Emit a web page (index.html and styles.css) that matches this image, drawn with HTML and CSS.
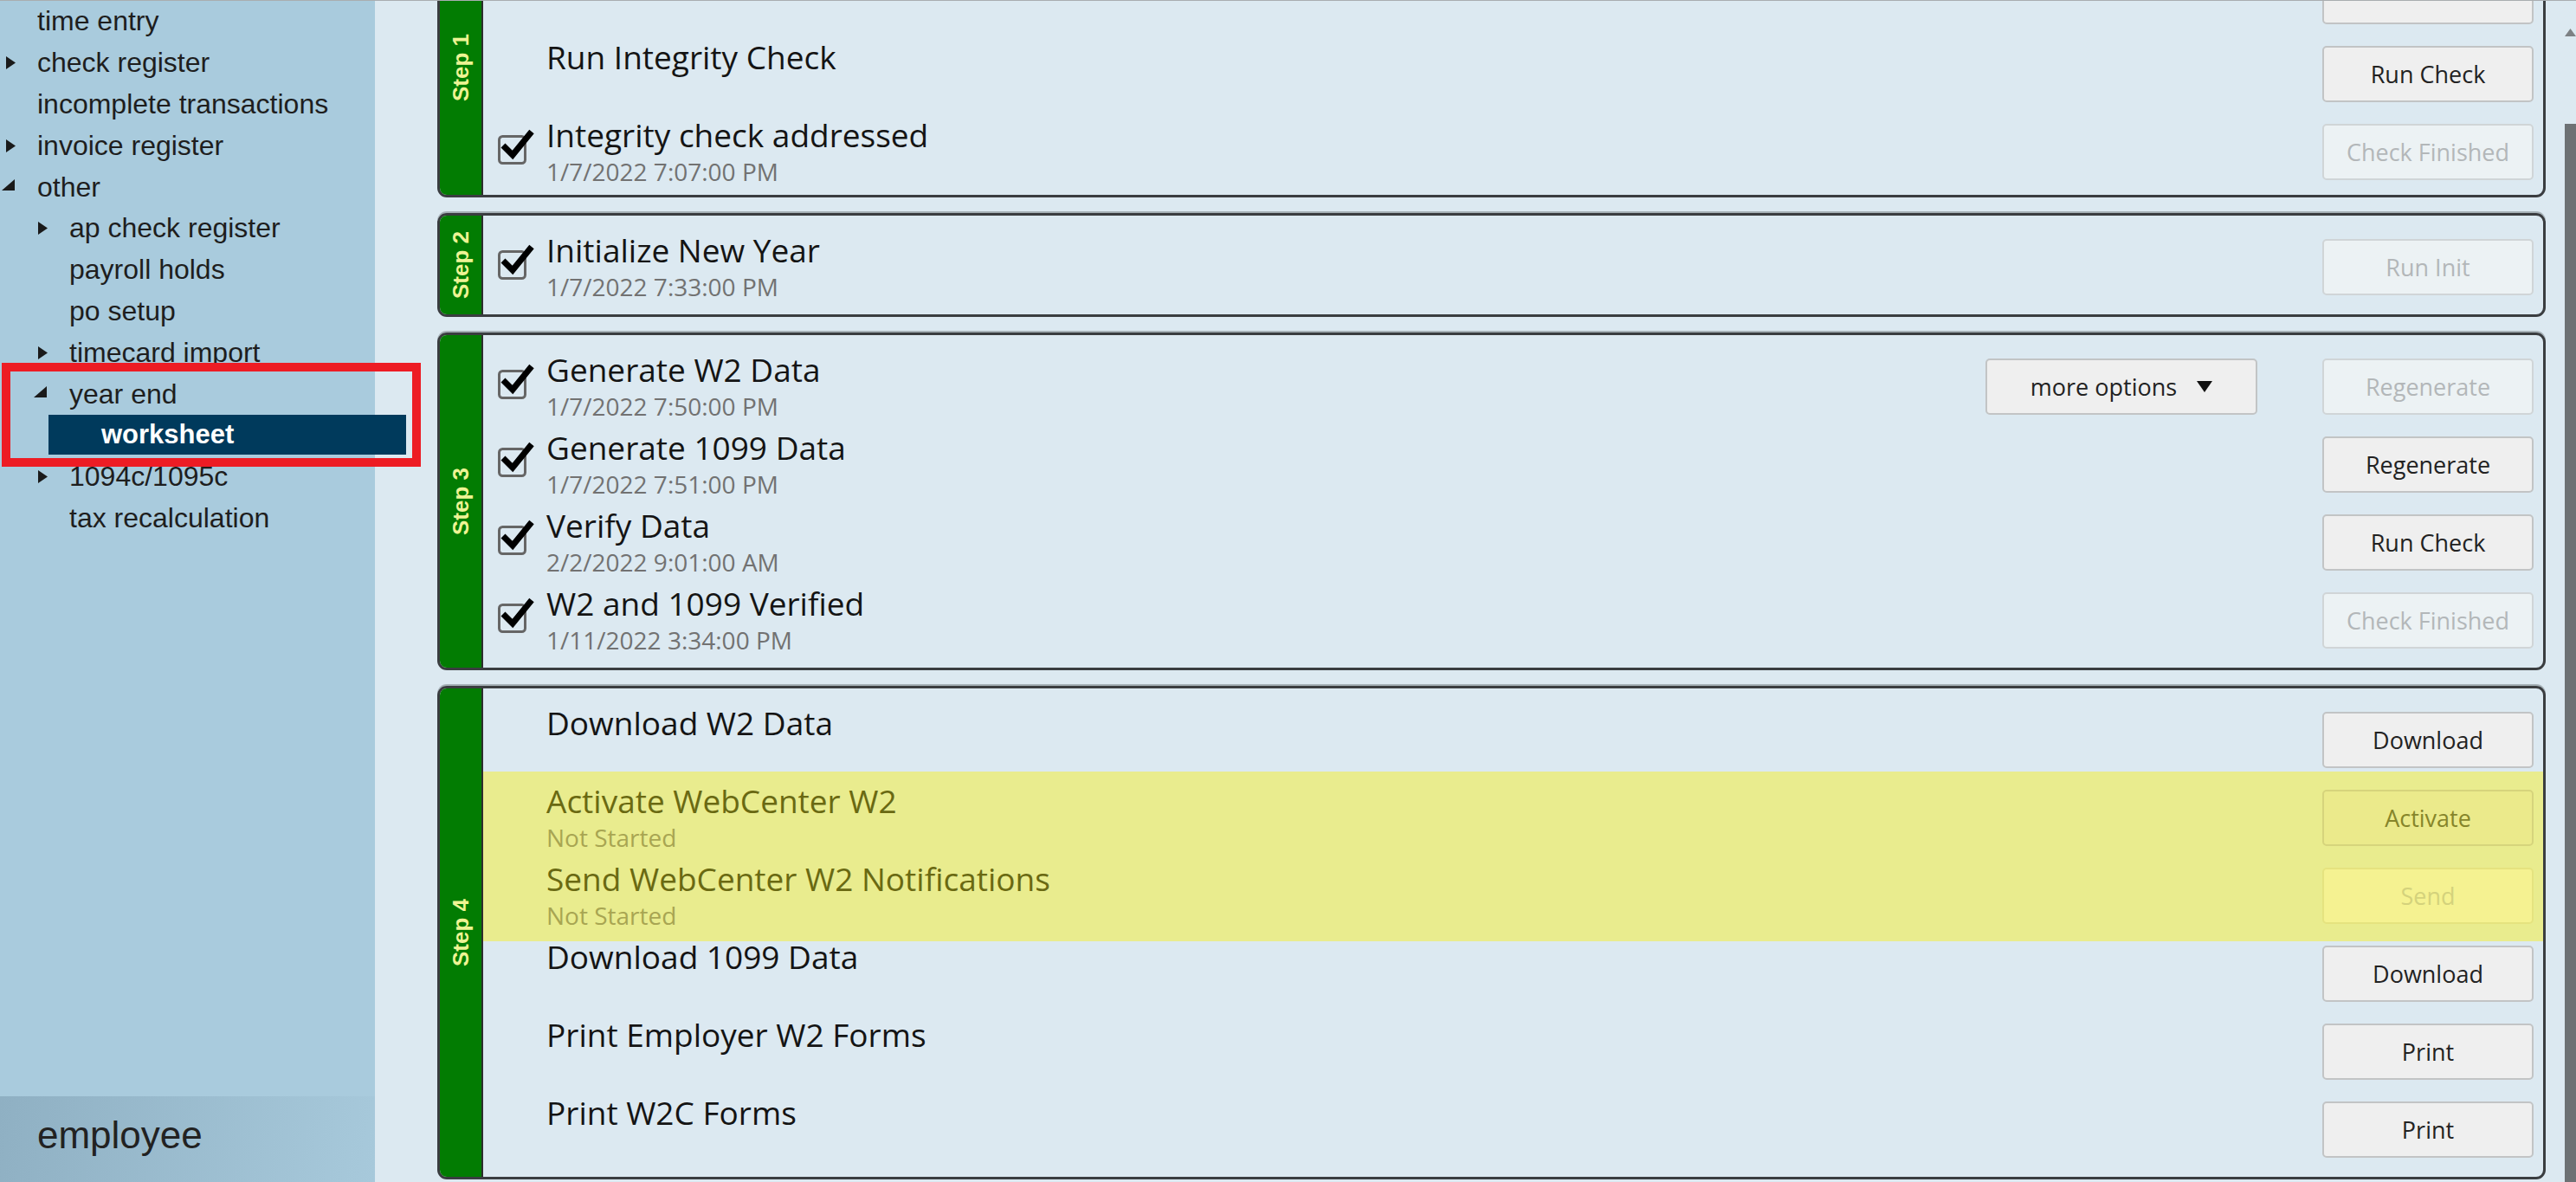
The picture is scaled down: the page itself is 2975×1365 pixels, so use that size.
FILE: index.html
```html
<!DOCTYPE html>
<html lang="en">
<head>
<meta charset="utf-8">
<title>Year End Worksheet</title>
<link rel="stylesheet" href="styles.css">
</head>
<body>
<div class="app">
  <aside class="sidebar">
    <ul class="tree">
      <li class="node"><span class="tog"></span><span class="lbl">time entry</span></li>
      <li class="node"><span class="tog"><svg class="tri-r" viewBox="0 0 11 15"><polygon points="0,0 11,7.5 0,15"/></svg></span><span class="lbl">check register</span></li>
      <li class="node"><span class="tog"></span><span class="lbl">incomplete transactions</span></li>
      <li class="node"><span class="tog"><svg class="tri-r" viewBox="0 0 11 15"><polygon points="0,0 11,7.5 0,15"/></svg></span><span class="lbl">invoice register</span></li>
      <li class="node"><span class="tog"><svg class="tri-se" viewBox="0 0 15 13"><polygon points="15,0 15,13 0,13"/></svg></span><span class="lbl">other</span></li>
      <li class="node l2"><span class="tog"><svg class="tri-r" viewBox="0 0 11 15"><polygon points="0,0 11,7.5 0,15"/></svg></span><span class="lbl">ap check register</span></li>
      <li class="node l2"><span class="tog"></span><span class="lbl">payroll holds</span></li>
      <li class="node l2"><span class="tog"></span><span class="lbl">po setup</span></li>
      <li class="node l2"><span class="tog"><svg class="tri-r" viewBox="0 0 11 15"><polygon points="0,0 11,7.5 0,15"/></svg></span><span class="lbl">timecard import</span></li>
      <li class="node l2"><span class="tog"><svg class="tri-se" viewBox="0 0 15 13"><polygon points="15,0 15,13 0,13"/></svg></span><span class="lbl">year end</span></li>
      <li class="node sel"><span class="lbl">worksheet</span></li>
      <li class="node l2"><span class="tog"><svg class="tri-r" viewBox="0 0 11 15"><polygon points="0,0 11,7.5 0,15"/></svg></span><span class="lbl">1094c/1095c</span></li>
      <li class="node l2"><span class="tog"></span><span class="lbl">tax recalculation</span></li>
    </ul>
    <div class="annot"></div>
    <div class="module">employee</div>
  </aside>

  <main class="main">
    <div class="steps">
      <section class="panel p1">
        <div class="band"><span>Step 1</span></div>
        <div class="rows">
          <div class="row">
            <span class="cb"></span>
            <div class="txt"><div class="title">Archive Current Data (Best Practice)</div></div>
            <button class="btn"></button>
          </div>
          <div class="row">
            <span class="cb"></span>
            <div class="txt"><div class="title">Run Integrity Check</div></div>
            <button class="btn">Run Check</button>
          </div>
          <div class="row">
            <svg class="cb" viewBox="0 0 44 44"><rect x="3.5" y="8.5" width="30" height="31" rx="4" fill="none" stroke="#666" stroke-width="3"/><path d="M8 19 L19 30 L41 3" fill="none" stroke="#000" stroke-width="7"/></svg>
            <div class="txt"><div class="title">Integrity check addressed</div><div class="date">1/7/2022 7:07:00 PM</div></div>
            <button class="btn dis">Check Finished</button>
          </div>
        </div>
      </section>

      <section class="panel">
        <div class="band"><span>Step 2</span></div>
        <div class="rows">
          <div class="row">
            <svg class="cb" viewBox="0 0 44 44"><rect x="3.5" y="8.5" width="30" height="31" rx="4" fill="none" stroke="#666" stroke-width="3"/><path d="M8 19 L19 30 L41 3" fill="none" stroke="#000" stroke-width="7"/></svg>
            <div class="txt"><div class="title">Initialize New Year</div><div class="date">1/7/2022 7:33:00 PM</div></div>
            <button class="btn dis">Run Init</button>
          </div>
        </div>
      </section>

      <section class="panel">
        <div class="band"><span>Step 3</span></div>
        <div class="rows">
          <div class="row">
            <svg class="cb" viewBox="0 0 44 44"><rect x="3.5" y="8.5" width="30" height="31" rx="4" fill="none" stroke="#666" stroke-width="3"/><path d="M8 19 L19 30 L41 3" fill="none" stroke="#000" stroke-width="7"/></svg>
            <div class="txt"><div class="title">Generate W2 Data</div><div class="date">1/7/2022 7:50:00 PM</div></div>
            <button class="btn more">more options <svg class="caret" viewBox="0 0 18 13"><polygon points="0,0 18,0 9,13"/></svg></button>
            <button class="btn dis">Regenerate</button>
          </div>
          <div class="row">
            <svg class="cb" viewBox="0 0 44 44"><rect x="3.5" y="8.5" width="30" height="31" rx="4" fill="none" stroke="#666" stroke-width="3"/><path d="M8 19 L19 30 L41 3" fill="none" stroke="#000" stroke-width="7"/></svg>
            <div class="txt"><div class="title">Generate 1099 Data</div><div class="date">1/7/2022 7:51:00 PM</div></div>
            <button class="btn">Regenerate</button>
          </div>
          <div class="row">
            <svg class="cb" viewBox="0 0 44 44"><rect x="3.5" y="8.5" width="30" height="31" rx="4" fill="none" stroke="#666" stroke-width="3"/><path d="M8 19 L19 30 L41 3" fill="none" stroke="#000" stroke-width="7"/></svg>
            <div class="txt"><div class="title">Verify Data</div><div class="date">2/2/2022 9:01:00 AM</div></div>
            <button class="btn">Run Check</button>
          </div>
          <div class="row">
            <svg class="cb" viewBox="0 0 44 44"><rect x="3.5" y="8.5" width="30" height="31" rx="4" fill="none" stroke="#666" stroke-width="3"/><path d="M8 19 L19 30 L41 3" fill="none" stroke="#000" stroke-width="7"/></svg>
            <div class="txt"><div class="title">W2 and 1099 Verified</div><div class="date">1/11/2022 3:34:00 PM</div></div>
            <button class="btn dis">Check Finished</button>
          </div>
        </div>
      </section>

      <section class="panel">
        <div class="band"><span>Step 4</span></div>
        <div class="rows">
          <div class="row">
            <span class="cb"></span>
            <div class="txt"><div class="title">Download W2 Data</div></div>
            <button class="btn">Download</button>
          </div>
          <div class="hl">
            <div class="row">
              <span class="cb"></span>
              <div class="txt"><div class="title">Activate WebCenter W2</div><div class="date">Not Started</div></div>
              <button class="btn act">Activate</button>
            </div>
            <div class="row">
              <span class="cb"></span>
              <div class="txt"><div class="title">Send WebCenter W2 Notifications</div><div class="date">Not Started</div></div>
              <button class="btn act dis">Send</button>
            </div>
          </div>
          <div class="row">
            <span class="cb"></span>
            <div class="txt"><div class="title">Download 1099 Data</div></div>
            <button class="btn">Download</button>
          </div>
          <div class="row">
            <span class="cb"></span>
            <div class="txt"><div class="title">Print Employer W2 Forms</div></div>
            <button class="btn">Print</button>
          </div>
          <div class="row">
            <span class="cb"></span>
            <div class="txt"><div class="title">Print W2C Forms</div></div>
            <button class="btn">Print</button>
          </div>
        </div>
      </section>
    </div>
  </main>

  <div class="scroll">
    <svg class="up" viewBox="0 0 13 9"><polygon points="6.5,0 13,9 0,9"/></svg>
    <div class="thumb"></div>
  </div>
</div>
</body>
</html>
```

FILE: styles.css
```css
* { box-sizing: border-box; }
html, body { margin: 0; padding: 0; }
body {
  width: 2975px;
  height: 1365px;
  overflow: hidden;
  font-family: "Liberation Sans", Arial, sans-serif;
  background: #dce9f1;
}
.app {
  display: flex;
  height: 1365px;
  border-top: 1px solid #a9adb0;
  overflow: hidden;
}

/* ---------- sidebar ---------- */
.sidebar {
  position: relative;
  z-index: 2;
  width: 433px;
  flex: none;
  background: #a9cbdd;
  display: flex;
  flex-direction: column;
}
.tree {
  list-style: none;
  margin: 0;
  padding: 0;
  flex: 1;
}
.node {
  display: flex;
  align-items: center;
  height: 47.8px;
  font-size: 32px;
  color: #1e1e1e;
  white-space: nowrap;
}
.l2 { padding-left: 37px; }
.tog {
  width: 43px;
  flex: none;
  display: flex;
  align-items: center;
}
.tri-r {
  width: 11px;
  height: 15px;
  margin-left: 7px;
  fill: #1a1a1a;
}
.tri-se {
  width: 15px;
  height: 13px;
  margin-left: 2px;
  margin-top: -5px;
  fill: #1a1a1a;
}
.node.sel {
  margin-left: 56px;
  width: 413px;
  height: 46px;
  margin-bottom: 1.8px;
  padding-left: 61px;
  background: #003a5c;
  color: #fff;
  font-weight: bold;
  font-size: 31px;
}
.annot {
  position: absolute;
  left: 2px;
  top: 418px;
  width: 484px;
  height: 120px;
  border: 10px solid #ed1c24;
  pointer-events: none;
}
.module {
  height: 99px;
  flex: none;
  display: flex;
  align-items: center;
  padding: 0 0 10px 43px;
  font-size: 44px;
  color: #222;
  background: linear-gradient(100deg, #8fb0c3 0%, #a7c9db 100%);
}

/* ---------- main ---------- */
.main {
  flex: 1;
  min-width: 0;
  background: #dce9f1;
  padding: 0 22px 0 72px;
  overflow: hidden;
  font-family: "Open Sans", "Noto Sans", sans-serif;
}
.steps {
  display: flex;
  flex-direction: column;
  gap: 18px;
  margin-top: -73px;
}
.panel {
  display: flex;
  border: 3px solid #3a3d40;
  border-radius: 11px;
  overflow: hidden;
  box-shadow: 0 -2px 0 #a6b1b7;
}
.band {
  width: 50px;
  flex: none;
  background: #027c02;
  border-right: 2px solid #2d2d2d;
  display: flex;
  align-items: center;
  justify-content: center;
}
.band span {
  writing-mode: vertical-rl;
  transform: rotate(180deg);
  font: bold 26px "Liberation Sans", Arial, sans-serif;
  color: #eef494;
  white-space: nowrap;
}
.rows {
  flex: 1;
  min-width: 0;
  display: flex;
  flex-direction: column;
  gap: 25px;
  padding: 27px 0 22px;
}
.p1 .rows {
  padding: 32px 0 17px;
}
.row {
  display: flex;
  align-items: flex-start;
  height: 65px;
  padding: 0 11px 0 15px;
}
.cb {
  width: 44px;
  height: 44px;
  flex: none;
  margin-top: 6px;
}
.txt {
  flex: 1;
  min-width: 0;
  margin: -7px 0 0 14px;
  white-space: nowrap;
}
.title {
  font-size: 37px;
  line-height: 40px;
  color: #141414;
}
.date {
  font-size: 28px;
  line-height: 44px;
  color: #727272;
}
.btn {
  width: 244px;
  height: 65px;
  flex: none;
  border: 2px solid #c2c4c5;
  border-radius: 5px;
  background: #efefef;
  font: 27px "Open Sans", "Noto Sans", sans-serif;
  color: #222;
  padding: 0;
  display: flex;
  align-items: center;
  justify-content: center;
}
.btn.dis {
  background: #ecf2f4;
  border-color: #d0d5d7;
  color: #b3b7b9;
}
.btn.more {
  width: 314px;
  margin-right: 75px;
  gap: 23px;
}
.caret {
  width: 18px;
  height: 13px;
  fill: #111;
}
.hl {
  background: #e9ec8e;
  margin: -21px 0 -20px;
  padding: 21px 0 20px;
  display: flex;
  flex-direction: column;
  gap: 25px;
}
.hl .title { color: #6a6912; }
.hl .date { color: #a8a552; }
.btn.act {
  background: #ebea8b;
  border-color: #d6d47c;
  color: #86852a;
}
.btn.act.dis {
  background: #f5f291;
  border-color: #e5e37f;
  color: #d4d27c;
}

/* ---------- scrollbar ---------- */
.scroll {
  width: 13px;
  flex: none;
  background: #dce9f1;
  display: flex;
  flex-direction: column;
  padding-top: 32px;
}
.scroll .up {
  width: 13px;
  height: 9px;
  fill: #7d8184;
}
.thumb {
  flex: 1;
  margin-top: 101px;
  background: #6d7174;
}
```
